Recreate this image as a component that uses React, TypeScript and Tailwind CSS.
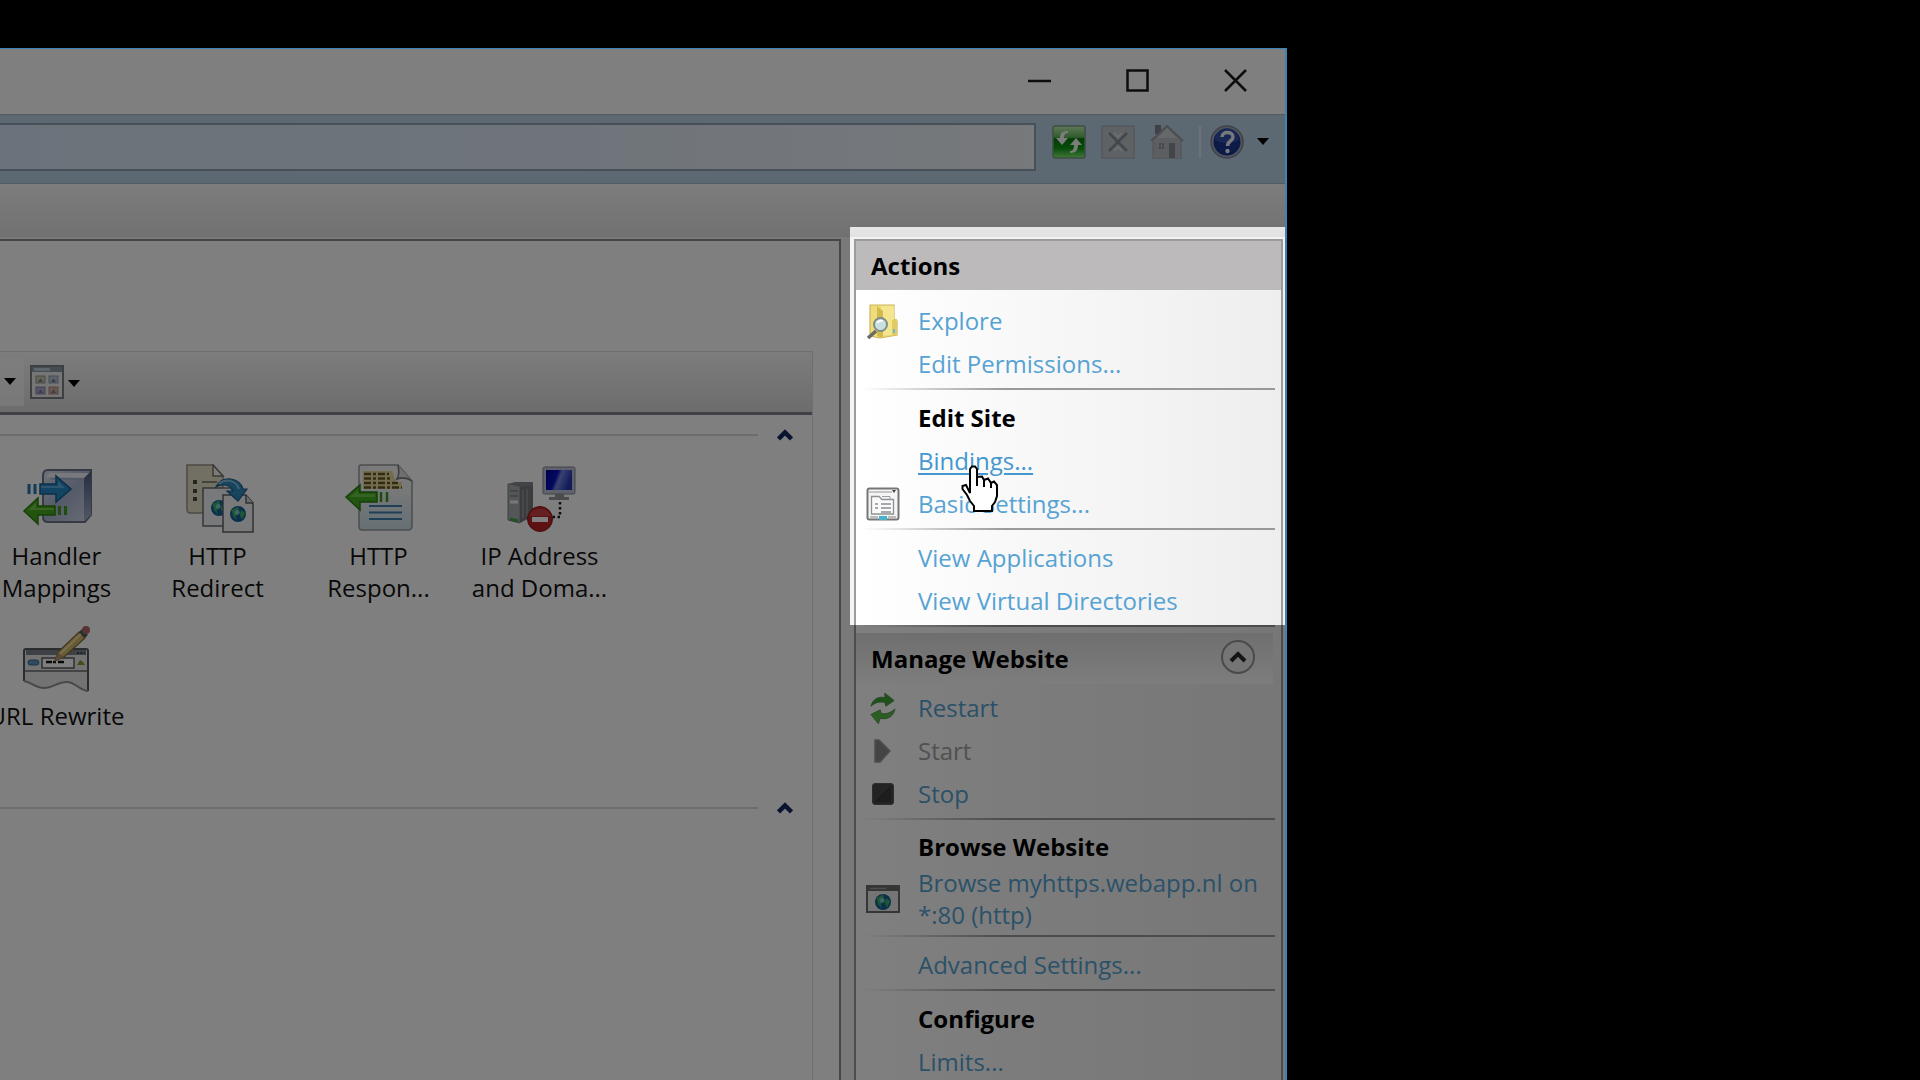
import React from 'react';

type IconProps = { className?: string };

/* ---------- toolbar icons ---------- */

const RefreshIcon = () => (
  <svg viewBox="0 0 34 34" className="size-[34px]" aria-hidden="true">
    <defs>
      <linearGradient id="refreshBg" x1="0" y1="0" x2="0" y2="1">
        <stop offset="0" stopColor="#c4efb4" />
        <stop offset="0.35" stopColor="#63b85a" />
        <stop offset="0.4" stopColor="#067a0a" />
        <stop offset="0.7" stopColor="#109a14" />
        <stop offset="1" stopColor="#86f07a" />
      </linearGradient>
    </defs>
    <rect x="1" y="1" width="32" height="32" rx="2" fill="url(#refreshBg)" stroke="#7c9c84" strokeWidth="1.5" />
    <path d="M16 6 C10 6 8 8 8 13 H4 L10 20 L16 13 H12 C12 10 13 8 16 8 Z" fill="#f4fbf2" />
    <path d="M18 28 C24 28 26 25 26 20 H30 L24 13 L18 20 H22 C22 24 21 26 18 26 Z" fill="#f4fbf2" />
  </svg>
);

const StopLoadIcon = () => (
  <svg viewBox="0 0 34 34" className="size-[34px]" aria-hidden="true">
    <rect x="1" y="1" width="32" height="32" fill="#bfc4ca" stroke="#a9b1bb" strokeWidth="1.5" />
    <path d="M8 8 L26 26 M26 8 L8 26" stroke="#868c96" strokeWidth="2.500" />
    <path d="M13 8 L17 12 L21 8 M13 26 L17 22 L21 26" stroke="#dde1e5" strokeWidth="1.5" fill="none" />
  </svg>
);

const HomeIcon = () => (
  <svg viewBox="0 0 34 34" className="size-[34px]" aria-hidden="true">
    <rect x="5" y="0" width="6" height="9" fill="#7c838c" />
    <path d="M3 15 L17 2 L31 15 V34 H3 Z" fill="#b9bdc2" stroke="#9fa6af" strokeWidth="1" />
    <path d="M1 16 L17 1 L33 16" fill="none" stroke="#969ca5" strokeWidth="2" />
    <path d="M17 3 L27 13 H7 Z" fill="#cdd1d5" />
    <rect x="9" y="18" width="5" height="6" fill="#858b94" />
    <rect x="19" y="18" width="6" height="15" fill="#858b94" />
    <path d="M11.500 18 V24 M9 21 H14" stroke="#b9bdc2" strokeWidth="1" />
  </svg>
);

const HelpIcon = () => (
  <svg viewBox="0 0 36 36" className="size-9" aria-hidden="true">
    <circle cx="18" cy="18" r="16" fill="#a4a9b8" stroke="#7e8596" strokeWidth="1.500" />
    <circle cx="18" cy="18" r="13.500" fill="#16348e" />
    <path d="M6 16 A12 12 0 0 1 30 16 C24 20 12 20 6 16 Z" fill="#4560b8" opacity="0.6" />
    <path d="M13 13 C13 7 24 7 24 13 C24 17 18.500 17 18.500 22" fill="none" stroke="#eef2ff" strokeWidth="3.500" />
    <circle cx="18.500" cy="27" r="2.200" fill="#eef2ff" />
  </svg>
);

const Caret = ({ className = '' }: IconProps) => (
  <svg viewBox="0 0 12 8" className={`h-2 w-3 ${className}`} aria-hidden="true">
    <path d="M0 0 H12 L6 7 Z" fill="#000" />
  </svg>
);

const ViewModeIcon = () => (
  <svg viewBox="0 0 34 34" className="size-[34px]" aria-hidden="true">
    <rect x="1" y="1" width="32" height="32" fill="#ececec" stroke="#7b7f86" strokeWidth="2" />
    <rect x="2" y="2" width="30" height="5" fill="#8f98a4" />
    <rect x="4" y="3" width="16" height="3" fill="#b8c8d8" />
    <rect x="6" y="11" width="9" height="7" fill="#c8c8b0" stroke="#94948a" />
    <rect x="19" y="11" width="9" height="7" fill="#b5c6d6" stroke="#8f9daa" />
    <rect x="6" y="22" width="9" height="7" fill="#a9a6cf" stroke="#8885aa" />
    <rect x="19" y="22" width="9" height="7" fill="#d2ada2" stroke="#aa8b82" />
    <path d="M8 17 L10.500 13.500 L13 17 Z M21 17 L23.500 13.500 L26 17 Z M8 28 L10.500 24.500 L13 28 Z M21 28 L23.500 24.500 L26 28 Z" fill="#737a8c" />
  </svg>
);

const CollapseIcon = () => (
  <svg viewBox="0 0 16 12" className="h-3 w-4" aria-hidden="true">
    <path d="M1.500 10 L8 3.500 L14.500 10" fill="none" stroke="#14285f" strokeWidth="4.500" />
  </svg>
);

/* ---------- feature icons ---------- */

const Globe = ({ x, y, r }: { x: number; y: number; r: number }) => (
  <g transform={`translate(${x} ${y})`}>
    <circle r={r} fill="#14609a" />
    <path d={`M${-r * 0.8} ${-r * 0.5} L0 ${-r * 0.95} L${r * 0.2} ${-r * 0.2} L${-r * 0.3} ${r * 0.3} L${-r * 0.1} ${r * 0.8} L${-r * 0.6} ${r * 0.3} Z`} fill="#3fae68" />
    <path d={`M${r * 0.4} ${-r * 0.5} L${r * 0.9} ${-r * 0.1} L${r * 0.5} ${r * 0.7} L${r * 0.2} ${r * 0.1} Z`} fill="#3fae68" />
    <circle r={r * 0.3} cx={-r * 0.1} cy={-r * 0.2} fill="#8ed2ee" opacity="0.8" />
  </g>
);

const HandlerIcon = () => (
  <svg viewBox="0 0 72 72" className="size-[72px]" aria-hidden="true">
    <defs>
      <linearGradient id="handlerBox" x1="0" y1="0" x2="1" y2="1">
        <stop offset="0" stopColor="#dfe5f2" />
        <stop offset="0.5" stopColor="#aab5d2" />
        <stop offset="1" stopColor="#d3dbea" />
      </linearGradient>
      <linearGradient id="handlerSide" x1="0" y1="0" x2="0" y2="1">
        <stop offset="0" stopColor="#4d5c82" />
        <stop offset="1" stopColor="#a3afca" />
      </linearGradient>
    </defs>
    <path d="M27 6 H70 V51 L64 58 H27 Q22 58 22 53 V12 Q22 6 27 6 Z" fill="url(#handlerBox)" stroke="#6c7488" strokeWidth="2" />
    <path d="M63 14 L70 7 V51 L63 57 Z" fill="url(#handlerSide)" />
    <path d="M25 13 L29 9 H68 L63 14 Z" fill="#eef2f9" />
    <path d="M30 15 H62" stroke="#a4afcc" strokeWidth="1.500" />
    <path d="M19 20 H35 V12 L50 25 L35 38 V30 H19 Z" fill="#2688c6" stroke="#17608f" strokeWidth="1.500" />
    <path d="M20 22 H37 V17 L44 24 H20 Z" fill="#6fbfe8" opacity="0.7" />
    <path d="M8 20 V30 M14 20 V30" stroke="#2079b4" strokeWidth="3" />
    <path d="M34 42 H17 V34 L3 47 L17 60 V51 H34 Z" fill="#46a81f" stroke="#2f8113" strokeWidth="1.500" />
    <path d="M33 44 H15 V39 L7 46 H33 Z" fill="#8fdc5c" opacity="0.600" />
    <path d="M38.500 42 V51 M44.500 42 V51" stroke="#3c9a1b" strokeWidth="3" />
  </svg>
);

const RedirectIcon = () => (
  <svg viewBox="0 0 72 72" className="size-[72px]" aria-hidden="true">
    <path d="M5 1 H31 L41 12 V49 H8 Q5 49 5 45 Z" fill="#e4dfc6" stroke="#96948a" strokeWidth="1.500" />
    <path d="M31 1 V12 H41 Z" fill="#f6f6f2" stroke="#77756f" strokeWidth="1.500" />
    <path d="M11 18 H15 M11 27 H15 M11 35 H15" stroke="#4d4b45" strokeWidth="4" />
    <path d="M20 18 H35 M20 27 H30" stroke="#6c6a62" strokeWidth="1.500" />
    <path d="M21 24 H50 V62 H21 Z" fill="#f1f3f4" stroke="#6b6d70" strokeWidth="1.500" />
    <Globe x={37} y={44} r={8} />
    <path d="M41 31 H64 L71 39 V68 H41 Z" fill="#f4f5f6" stroke="#606266" strokeWidth="1.500" />
    <path d="M64 31 V39 H71" fill="#d8d8d8" stroke="#606266" strokeWidth="1.500" />
    <Globe x={56} y={50} r={8} />
    <path d="M34 23 C40 11 58 13 61 25 L65 25 L56 37 L45 27 H51 C49 21 40 19 34 23 Z" fill="#3288bd" stroke="#1b5f8c" strokeWidth="1.200" />
    <path d="M37 20 C43 14 54 16 57 25" fill="none" stroke="#82c2e2" strokeWidth="2" />
  </svg>
);

const ResponseIcon = () => (
  <svg viewBox="0 0 72 72" className="size-[72px]" aria-hidden="true">
    <defs>
      <linearGradient id="respPage" x1="0" y1="0" x2="0" y2="1">
        <stop offset="0.3" stopColor="#f4f4f4" />
        <stop offset="1" stopColor="#ccdfe8" />
      </linearGradient>
    </defs>
    <path d="M18 1 H55 L69 17 V62 Q69 66 65 66 H19 Q16 66 16 62 V3 Q16 1 18 1 Z" fill="url(#respPage)" stroke="#96999c" strokeWidth="1.500" />
    <path d="M55 1 Q57 10 54 15 Q62 12 69 17" fill="#dedede" stroke="#77797c" strokeWidth="1.500" />
    <path d="M20 7 H49 L53 18 H59 V25 H20 Z" fill="#e8d99a" />
    <path d="M21 10 H46 M21 14.500 H49 M21 19 H55 M21 23.500 H59" stroke="#67592a" strokeWidth="2.500" strokeDasharray="7 2 3 2" />
    <path d="M34 28 H17 V21 L3 33 L17 46 V38 H34 Z" fill="#43ad22" stroke="#2b7c14" strokeWidth="1.500" />
    <path d="M32 30 H15 V26 L7 33 H32 Z" fill="#86d95e" opacity="0.600" />
    <path d="M38 28 V38 M44 28 V38" stroke="#3b981e" strokeWidth="2.500" />
    <path d="M26 42 H59 M26 48.500 H59 M26 55 H59" stroke="#3c7eae" strokeWidth="2.200" />
  </svg>
);

const IpAddressIcon = () => (
  <svg viewBox="0 0 72 72" className="size-[72px]" aria-hidden="true">
    <defs>
      <linearGradient id="ipScreen" x1="0" y1="0" x2="1" y2="0.3">
        <stop offset="0" stopColor="#00009c" />
        <stop offset="0.45" stopColor="#0a12c0" />
        <stop offset="0.6" stopColor="#7486de" />
        <stop offset="1" stopColor="#2438b4" />
      </linearGradient>
    </defs>
    <path d="M4 20 L16 21 V59 L4 56 Z" fill="#a9aeb1" stroke="#7f8487" />
    <path d="M16 21 L29 20 V52 L16 59 Z" fill="#74797c" />
    <path d="M4 20 L11 18 H29 V21 L16 23 Z" fill="#85898c" />
    <path d="M6 27 H14 M6 32 H14" stroke="#7b7f83" strokeWidth="1.500" />
    <path d="M6 38 H14" stroke="#f0f0f0" strokeWidth="3" />
    <path d="M19 26 V54 M23 25 V52" stroke="#94989b" strokeWidth="1.500" />
    <path d="M6 55 L14 57" stroke="#45a045" strokeWidth="3" />
    <rect x="39" y="3" width="32" height="27" rx="1.500" fill="#bfc3d6" stroke="#868a9c" />
    <rect x="42" y="6" width="26" height="20" fill="url(#ipScreen)" />
    <path d="M51 30 H60 V33 H65 V36 H45 V33 H51 Z" fill="#94979e" />
    <path d="M56 38 V53 H47" fill="none" stroke="#1b1b1b" strokeWidth="2.500" strokeDasharray="2.500 2.500" />
    <circle cx="36" cy="55" r="12.500" fill="#bd2226" stroke="#8c1a1c" />
    <path d="M25 52 A12 12 0 0 1 47 52 Z" fill="#e0605e" opacity="0.500" />
    <rect x="28" y="53" width="16" height="5" fill="#fff" />
  </svg>
);

const UrlRewriteIcon = () => (
  <svg viewBox="0 0 72 72" className="size-[72px]" aria-hidden="true">
    <path d="M5 25 H65 Q67 25 67 27 V67 C58 66 54 58 46 58 C36 58 32 64 23 64 C14 64 10 58 3 57 V27 Q3 25 5 25 Z" fill="#e6e6e6" />
    <path d="M3 57 V27 Q3 25 5 25 H65 Q67 25 67 27 V67" fill="none" stroke="#55585c" strokeWidth="2" />
    <path d="M67 67 C58 66 54 58 46 58 C36 58 32 64 23 64 C14 64 10 58 3 57" fill="none" stroke="#8d9094" strokeWidth="2" />
    <rect x="5" y="26" width="60" height="5" fill="#7d838b" />
    <path d="M4 47 H66" stroke="#66696d" strokeWidth="1.500" />
    <rect x="21" y="34" width="32" height="10" fill="#fff" stroke="#5a5d61" strokeWidth="1.500" />
    <path d="M25 38 H44" stroke="#111" strokeWidth="2.500" strokeDasharray="6 1 3 2" />
    <rect x="7" y="36" width="11" height="5" rx="2.500" fill="#5c93c0" stroke="#37688f" />
    <path d="M56 41 L59 36 L62 38 L64 41 Z" fill="#7f9c2b" />
    <path d="M56 29 H64" stroke="#3f444b" strokeWidth="2" strokeDasharray="2 1.500" />
    <path d="M34 37 L37 28 L58 8 L64 14 L43 33 Z" fill="#d3ba6c" stroke="#80683a" strokeWidth="1.200" />
    <path d="M34 37 L37 28 L43 33 Z" fill="#b79769" />
    <path d="M39 30 L60 10" stroke="#f0dfa0" strokeWidth="1.800" />
    <path d="M58 8 L61 5 L67 11 L64 14 Z" fill="#4b6658" />
    <circle cx="65" cy="6" r="4" fill="#b5666a" />
  </svg>
);

/* ---------- action icons ---------- */

const ExploreIcon = () => (
  <svg viewBox="0 0 34 36" className="h-9 w-[34px]" aria-hidden="true">
    <path d="M4 2 H28 V16 L31 18 V32 L14 35 L4 33 Z" fill="#efdc7c" stroke="#cdb65a" strokeWidth="1.200" />
    <path d="M15 3 H28 V32 H15 Z" fill="#f4e68f" />
    <path d="M11 3 L17 8 V35 L11 33 Z" fill="#d4ba4e" />
    <path d="M26 17 L31 16 V32 L26 33 Z" fill="#e2cb62" />
    <rect x="27" y="26" width="2" height="4" fill="#72b6d8" />
    <path d="M10 28 L2 35" stroke="#6a6a64" strokeWidth="3.500" />
    <circle cx="14.500" cy="21.500" r="6.500" fill="#c9e0e2" stroke="#808c88" strokeWidth="2" />
    <path d="M11 20 Q13 17 17 18" stroke="#fff" strokeWidth="1.800" fill="none" />
  </svg>
);

const BasicSettingsIcon = () => (
  <svg viewBox="0 0 34 34" className="size-[34px]" aria-hidden="true">
    <rect x="1.500" y="1.500" width="31" height="31" rx="2" fill="#f5f5f5" stroke="#767676" strokeWidth="2" />
    <path d="M3 5 H26" stroke="#c3c7ca" strokeWidth="2" />
    <path d="M26 3 H30 L28 6 Z" fill="#444" />
    <path d="M5.500 9.500 H13 L16 12.500 H27.500 V27 H5.500 Z" fill="#fafafa" stroke="#8e9193" strokeWidth="1.300" />
    <path d="M16 9.500 H24 V12" fill="none" stroke="#9a9d9f" />
    <path d="M9 17 H12 M15 17 H25 M9 21 H12 M15 21 H25 M15 25 H25" stroke="#8a8f93" strokeWidth="1.500" />
    <rect x="13" y="29" width="8" height="4" fill="#48b2cd" />
    <path d="M4 30 H12 M22 30 H30" stroke="#bcbcbc" strokeWidth="2" />
  </svg>
);

const RestartIcon = () => (
  <svg viewBox="0 0 28 34" className="h-[34px] w-[26px]" aria-hidden="true">
    <path d="M1 15 C3 7 10 4 16 6 V1 L26 9 L17 15 L16 11 C10 10 6 11 1 15 Z" fill="#3da531" stroke="#5a8f54" strokeWidth="1" />
    <path d="M27 18 C25 27 18 30 11 28 L9 34 L1 24 L11 19 L12 23 C18 24 22 22 27 18 Z" fill="#56bd47" stroke="#5a8f54" strokeWidth="1" />
  </svg>
);

const StartIcon = () => (
  <svg viewBox="0 0 18 24" className="h-6 w-[18px]" aria-hidden="true">
    <path d="M1 1 H5 L16 12 L6 23 H1 Z" fill="#888" stroke="#9c9c9c" strokeWidth="1.500" />
  </svg>
);

const StopIcon = () => (
  <svg viewBox="0 0 22 22" className="size-[22px]" aria-hidden="true">
    <rect x="0.500" y="0.500" width="21" height="21" rx="2.500" fill="#484848" stroke="#5c5c5c" />
    <path d="M2 19 L19 2 V19 Z" fill="#3a3a3a" />
  </svg>
);

const BrowseIcon = () => (
  <svg viewBox="0 0 34 28" className="h-7 w-[34px]" aria-hidden="true">
    <rect x="1" y="1" width="32" height="26" fill="#ebebeb" stroke="#6c6c6c" strokeWidth="2" />
    <rect x="1" y="1" width="32" height="5" fill="#6a6a6a" />
    <path d="M4 3.500 H20" stroke="#9a9a9a" strokeWidth="1.500" />
    <Globe x={17} y={17} r={8} />
  </svg>
);

const HandCursor = ({ className = '' }: IconProps) => (
  <svg viewBox="0 0 38 48" className={`h-12 w-[38px] ${className}`} aria-hidden="true">
    <path
      d="M9 28 V4 L11 1.500 H14 L16 4 V12 L21 11.500 L23 15 L27 13.500 L30 18 L33 16.500 L36 20 V31 L34 37 L31 41 V46 H13 V41 L9 36 L6 30 L1.500 24 V21 L5 20 Z"
      fill="#fff"
      stroke="#000"
      strokeWidth="2"
    />
    <path d="M16 11 V21 M23 14 V22 M30 17 V23" stroke="#000" strokeWidth="2" />
  </svg>
);

/* ---------- data ---------- */

const features = [
  { lines: ['Handler', 'Mappings'], Icon: HandlerIcon },
  { lines: ['HTTP', 'Redirect'], Icon: RedirectIcon },
  { lines: ['HTTP', 'Respon...'], Icon: ResponseIcon },
  { lines: ['IP Address', 'and Doma...'], Icon: IpAddressIcon },
  { lines: ['URL Rewrite'], Icon: UrlRewriteIcon },
];

/* ---------- parts ---------- */

const Separator = () => (
  <div className="mx-1.5 mt-[3px] mb-1.5 h-0.5 bg-linear-to-r from-transparent via-[#999] via-35% to-[#999]" />
);

const SubTitle = ({ children }: { children: React.ReactNode }) => (
  <h3 className="pl-[62px] leading-[43px] font-bold">{children}</h3>
);

type ActionProps = { icon?: React.ReactNode; disabled?: boolean; hovered?: boolean; children: React.ReactNode };

const Action = ({ icon, disabled, hovered, children }: ActionProps) => (
  <li className="flex items-center gap-[18px] pl-2.5">
    <span className="flex w-[34px] shrink-0 justify-center">{icon}</span>
    {disabled ? (
      <button disabled className="leading-[43px] text-[#a2a2a2]">{children}</button>
    ) : (
      <a href="#" className={`leading-[43px] ${hovered ? 'text-[#4497cf] underline decoration-2 underline-offset-3' : 'text-[#56a3d3]'}`}>
        {children}
      </a>
    )}
  </li>
);

const GroupLine = ({ label }: { label: string }) => (
  <div className="flex h-4 items-center">
    <div className="h-0.5 flex-1 bg-[#d6dadc]" />
    <button aria-label={label} className="mx-[19px]">
      <CollapseIcon />
    </button>
  </div>
);

const TitleBar = () => (
  <div className="flex h-[65px] items-center justify-end gap-[75px] bg-white pr-[38px] pb-0.5">
    <button aria-label="Minimize">
      <svg viewBox="0 0 23 23" className="size-[23px]"><path d="M0 12 H23" stroke="#1a1a1a" strokeWidth="2.500" /></svg>
    </button>
    <button aria-label="Maximize">
      <svg viewBox="0 0 23 23" className="size-[23px]"><rect x="1.500" y="1.500" width="20" height="20" fill="none" stroke="#1a1a1a" strokeWidth="2.500" /></svg>
    </button>
    <button aria-label="Close">
      <svg viewBox="0 0 23 23" className="size-[23px]"><path d="M1 1 L22 22 M22 1 L1 22" stroke="#1a1a1a" strokeWidth="2.500" /></svg>
    </button>
  </div>
);

const AddressBar = () => (
  <div className="flex h-[70px] items-start border-y border-[#a5b4c4] bg-[#b9d0e5] pt-2 pr-4">
    <input
      aria-label="Address"
      className="h-12 min-w-0 flex-1 border-2 border-l-0 border-[#8f9fb0] bg-linear-to-r from-[#d5e6f7] via-[#dce8f5] to-[#eef2f7] outline-none"
    />
    <div className="flex items-center pt-px pl-4">
      <button aria-label="Refresh"><RefreshIcon /></button>
      <button aria-label="Stop loading" className="ml-[15px]"><StopLoadIcon /></button>
      <button aria-label="Home" className="ml-[15px]"><HomeIcon /></button>
      <div className="ml-[15px] h-8 w-0.5 bg-[#dfe3e6]" />
      <button aria-label="Help" className="ml-2 flex items-center gap-3">
        <HelpIcon />
        <Caret />
      </button>
    </div>
  </div>
);

const FeatureView = () => (
  <section className="flex min-w-0 flex-1 flex-col border-t-2 border-r-2 border-[#8c8c8c] bg-white pt-[110px] pr-[26px]">
    <div className="flex flex-1 flex-col border-t border-r border-[#dcdcdc]">
      <div className="flex h-[63px] items-center border-b-3 border-[#80808e] bg-linear-to-b from-[#fafafa] to-[#d9d9d9]">
        <button aria-label="Group by" className="flex h-12 w-6 items-center bg-white/60 pl-1">
          <Caret />
        </button>
        <button aria-label="View" className="flex items-center gap-1 pl-1.5">
          <ViewModeIcon />
          <Caret className="mt-1" />
        </button>
      </div>
      <div className="pt-3">
        <GroupLine label="Collapse IIS" />
        <ul className="-ml-6 grid h-[357px] grid-cols-[repeat(4,161px)] content-start gap-y-5 pt-[21px] text-[#111]">
          {features.map(({ lines, Icon }) => (
            <li key={lines.join(' ')}>
              <a href="#" className="flex flex-col items-center gap-1 text-center leading-8 whitespace-nowrap">
                <Icon />
                <span>
                  {lines.map((line) => (
                    <span key={line} className="block">{line}</span>
                  ))}
                </span>
              </a>
            </li>
          ))}
        </ul>
        <GroupLine label="Collapse Management" />
      </div>
    </div>
  </section>
);

const ActionsPane = () => (
  <aside className="w-[429px] shrink-0 border-x-2 border-t-2 border-[#9b9b9b] bg-linear-to-r from-white to-[#eeeeee]">
    <section className="relative">
      <h2 className="bg-[#bcbabb] pl-[15px] leading-[49px] font-bold">Actions</h2>
      <ul className="pt-[9px]">
        <Action icon={<ExploreIcon />}>Explore</Action>
        <Action>Edit Permissions...</Action>
      </ul>
      <Separator />
      <SubTitle>Edit Site</SubTitle>
      <ul className="relative">
        <Action hovered>Bindings...</Action>
        <Action icon={<BasicSettingsIcon />}>Basic Settings...</Action>
        <li className="pointer-events-none absolute top-6.5 left-[105px]">
          <HandCursor />
        </li>
      </ul>
      <Separator />
      <ul>
        <Action>View Applications</Action>
        <Action>View Virtual Directories</Action>
      </ul>
      {/* spotlight: dims everything outside this section */}
      <div className="pointer-events-none absolute -inset-x-1.5 -top-3.5 -bottom-[3px] z-10 shadow-[0_0_0_2000px_rgba(0,0,0,0.5)]" />
    </section>
    <Separator />
    <section>
      <div className="mr-2 flex items-center justify-between bg-linear-to-b from-[#dedede] to-[#fbfbfb] pr-[17px] pl-[15px]">
        <h2 className="leading-[51px] font-bold">Manage Website</h2>
        <button aria-label="Collapse Manage Website" className="pb-1">
          <svg viewBox="0 0 36 36" className="size-9">
            <circle cx="18" cy="18" r="16" fill="#eaeaea" stroke="#959595" strokeWidth="2" />
            <path d="M11 22 L18 15 L25 22" fill="none" stroke="#2a2a2a" strokeWidth="4" />
          </svg>
        </button>
      </div>
      <ul className="pt-0.5">
        <Action icon={<RestartIcon />}>Restart</Action>
        <Action icon={<StartIcon />} disabled>Start</Action>
        <Action icon={<StopIcon />}>Stop</Action>
      </ul>
      <Separator />
      <h3 className="pl-[62px] leading-[41px] font-bold">Browse Website</h3>
      <ul>
        <li className="flex items-center gap-[18px] pl-2.5">
          <span className="w-[34px] shrink-0"><BrowseIcon /></span>
          <a href="#" className="leading-8 whitespace-nowrap text-[#56a3d3]">
            Browse myhttps.webapp.nl on<br />*:80 (http)
          </a>
        </li>
      </ul>
      <div className="pt-px">
        <Separator />
      </div>
      <ul>
        <Action>Advanced Settings...</Action>
      </ul>
      <Separator />
      <SubTitle>Configure</SubTitle>
      <ul>
        <Action>Limits...</Action>
      </ul>
    </section>
  </aside>
);

export default function App() {
  return (
    <main className="flex h-screen overflow-hidden bg-black pt-12 pr-[633px] font-['Open_Sans','Noto_Sans',sans-serif] text-2xl text-black">
      <div className="flex min-w-0 flex-1 flex-col self-start overflow-hidden border-t border-r-2 border-[#3d84b4] bg-[#ececec]">
        <TitleBar />
        <AddressBar />
        <div className="h-[53px] bg-linear-to-b from-[#fafafa] to-[#e2e2e2]" />
        <div className="flex justify-between gap-[13px] bg-[#f3f3f3] pt-0.5 pr-0.5">
          <FeatureView />
          <ActionsPane />
        </div>
      </div>
    </main>
  );
}
